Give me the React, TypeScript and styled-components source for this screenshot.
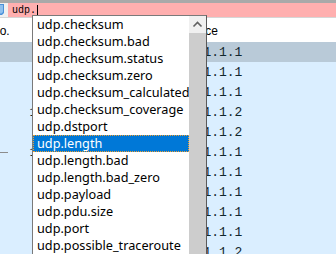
import React from "react";
import styled, { createGlobalStyle } from "styled-components";

interface Packet {
  no: string;
  source: string;
  related?: boolean;
}

const packets: Packet[] = [
  { no: "12", source: "10.1.1.1" },
  { no: "13", source: "10.1.1.1" },
  { no: "14", source: "10.1.1.1" },
  { no: "107", source: "10.1.1.2" },
  { no: "16", source: "10.1.1.2" },
  { no: "109", source: "10.1.1.1", related: true },
  { no: "18", source: "10.1.1.1" },
  { no: "19", source: "10.1.1.1" },
  { no: "20", source: "10.1.1.1" },
  { no: "21", source: "10.1.1.1" },
  { no: "22", source: "10.1.1.2" },
];

const fields = [
  "udp.checksum",
  "udp.checksum.bad",
  "udp.checksum.status",
  "udp.checksum.zero",
  "udp.checksum_calculated",
  "udp.checksum_coverage",
  "udp.dstport",
  "udp.length",
  "udp.length.bad",
  "udp.length.bad_zero",
  "udp.payload",
  "udp.pdu.size",
  "udp.port",
  "udp.possible_traceroute",
];

export default function App() {
  const selectedRow = 0;
  const activeField = 7;

  return (
    <Screen>
      <GlobalStyle />
      <FilterBar>
        <BookmarkSlot>
          <svg width="8" height="14" viewBox="0 0 8 14">
            <path d="M-4 1 H4 V10 L2 12 H-4 Z" fill="#4a90d9" />
            <path d="M0 2 H3 V9 L1.5 10.5 H0 Z" fill="#8fc0ee" />
          </svg>
        </BookmarkSlot>
        <FilterInput>
          udp.<Caret />
        </FilterInput>
      </FilterBar>

      <PacketList>
        <HeaderRow>
          <HeaderCell>No.</HeaderCell>
          <HeaderCell />
          <HeaderCell>Source</HeaderCell>
        </HeaderRow>
        {packets.map((p, i) => (
          <PacketRow key={i} $selected={i === selectedRow}>
            <NoCell>
              {p.related ? <RelatedLine /> : <span />}
              <span>{p.no}</span>
            </NoCell>
            <DataCell />
            <DataCell>{p.source}</DataCell>
          </PacketRow>
        ))}
      </PacketList>

      <Completer>
        <FieldList>
          {fields.map((f, i) => (
            <FieldItem key={f} $active={i === activeField}>
              {f}
            </FieldItem>
          ))}
        </FieldList>
        <ScrollBar>
          <ScrollButton>
            <svg width="17" height="17" viewBox="0 0 17 17">
              <polyline
                points="4.5,10.5 8.5,6.5 12.5,10.5"
                fill="none"
                stroke="#606060"
                strokeWidth="1.6"
              />
            </svg>
          </ScrollButton>
          <ScrollThumb />
        </ScrollBar>
      </Completer>
    </Screen>
  );
}

const GlobalStyle = createGlobalStyle`
  html, body {
    margin: 0;
    padding: 0;
    background: #fff;
  }
  body {
    overflow: hidden;
  }
`;

const Screen = styled.div`
  position: relative;
  width: 336px;
  height: 254px;
  overflow: hidden;
  background: #fff;
`;

const FilterBar = styled.div`
  display: flex;
  height: 14px;
  border-top: 3px solid #a9a9a9;
  border-bottom: 1px solid #d6d6d6;
  background: #f0f0f0;
`;

const BookmarkSlot = styled.div`
  width: 8px;
  display: flex;
  align-items: center;
`;

const FilterInput = styled.div`
  flex: 1;
  display: flex;
  align-items: center;
  padding-left: 4px;
  background: #ffafaf;
  font-family: "Liberation Mono", monospace;
  font-size: 10px;
  color: #000;
  white-space: pre;
`;

const Caret = styled.span`
  display: inline-block;
  width: 1px;
  height: 11px;
  margin-left: 1px;
  background: #000;
`;

const PacketList = styled.div`
  margin-left: -9px;
`;

const columns = "66px 123px 1fr";

const HeaderRow = styled.div`
  display: grid;
  grid-template-columns: ${columns};
  height: 24px;
  padding-top: 2px;
  box-sizing: border-box;
  align-items: center;
  background: #fff;
  font-family: "Liberation Sans", Arial, sans-serif;
  font-size: 12px;
  color: #000;
`;

const HeaderCell = styled.div`
  white-space: nowrap;
  overflow: hidden;
`;

const PacketRow = styled.div<{ $selected: boolean }>`
  display: grid;
  grid-template-columns: ${columns};
  height: 20px;
  align-items: center;
  background: ${(p) => (p.$selected ? "#b9cad8" : "#daeeff")};
  font-family: "Liberation Mono", monospace;
  font-size: 13px;
  color: #12272e;
`;

const NoCell = styled.div`
  display: flex;
  justify-content: space-between;
  align-items: center;
  padding-right: 4px;
  white-space: nowrap;
`;

const RelatedLine = styled.span`
  display: block;
  width: 17px;
  height: 1px;
  background: #8c8c8c;
`;

const DataCell = styled.div`
  white-space: nowrap;
  overflow: hidden;
`;

const Completer = styled.div`
  position: absolute;
  left: 32px;
  top: 15px;
  width: 175px;
  height: 260px;
  box-sizing: border-box;
  display: flex;
  border: 1px solid #7a7a7a;
  border-right-color: #5a5a5a;
  background: #fff;
`;

const FieldList = styled.div`
  flex: 1;
  min-width: 0;
`;

const FieldItem = styled.div<{ $active: boolean }>`
  height: 17px;
  box-sizing: border-box;
  padding-left: 4px;
  line-height: 17px;
  font-family: "Noto Sans", "Segoe UI", sans-serif;
  font-size: 12.7px;
  white-space: nowrap;
  overflow: hidden;
  color: ${(p) => (p.$active ? "#fff" : "#000")};
  background: ${(p) => (p.$active ? "#0078d7" : "transparent")};
  outline: ${(p) => (p.$active ? "1px dotted #f0a030" : "none")};
  outline-offset: -1px;
`;

const ScrollBar = styled.div`
  width: 17px;
  display: flex;
  flex-direction: column;
  background: #f0f0f0;
`;

const ScrollButton = styled.div`
  height: 17px;
  display: flex;
  align-items: center;
  justify-content: center;
`;

const ScrollThumb = styled.div`
  flex: 1;
  background: #cdcdcd;
`;
